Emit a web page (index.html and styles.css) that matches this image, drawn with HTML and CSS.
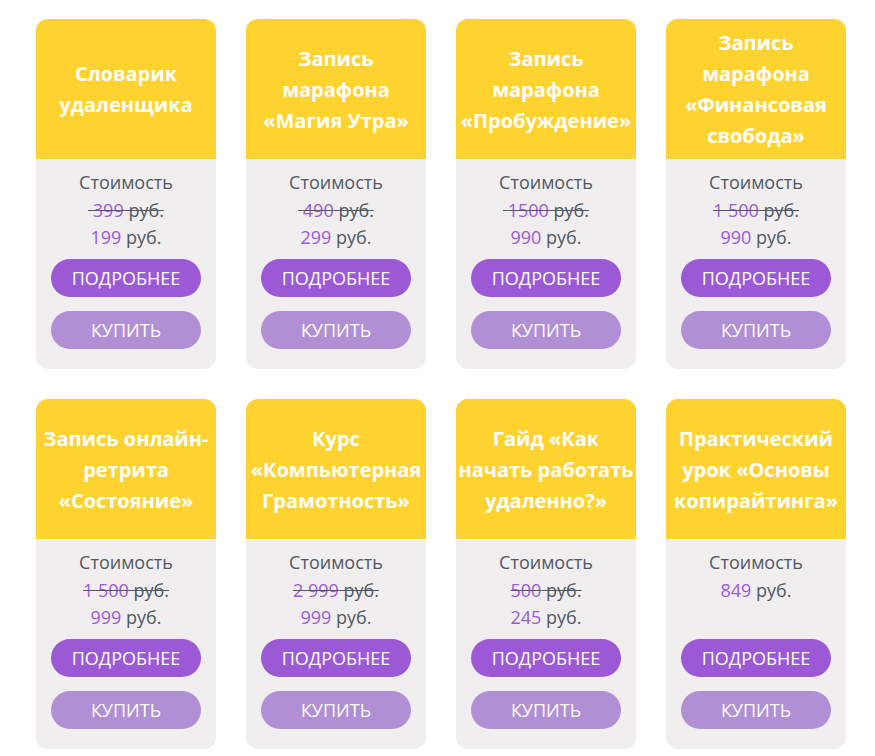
FILE: index.html
```html
<!DOCTYPE html>
<html lang="ru">
<head>
<meta charset="utf-8">
<link rel="stylesheet" href="styles.css">
</head>
<body>
<div class="grid">
  <div class="card">
    <div class="head">Словарик удаленщика</div>
    <div class="body">
      <div class="label">Стоимость</div>
      <div class="old"><s>&nbsp;<span class="num">399</span> руб.</s></div>
      <div class="new"><span class="num">199</span> руб.</div>
      <a class="btn more">ПОДРОБНЕЕ</a>
      <a class="btn buy">КУПИТЬ</a>
    </div>
  </div>
  <div class="card">
    <div class="head">Запись марафона «Магия Утра»</div>
    <div class="body">
      <div class="label">Стоимость</div>
      <div class="old"><s>&nbsp;<span class="num">490</span> руб.</s></div>
      <div class="new"><span class="num">299</span> руб.</div>
      <a class="btn more">ПОДРОБНЕЕ</a>
      <a class="btn buy">КУПИТЬ</a>
    </div>
  </div>
  <div class="card">
    <div class="head">Запись марафона «Пробуждение»</div>
    <div class="body">
      <div class="label">Стоимость</div>
      <div class="old"><s>&nbsp;<span class="num">1500</span> руб.</s></div>
      <div class="new"><span class="num">990</span> руб.</div>
      <a class="btn more">ПОДРОБНЕЕ</a>
      <a class="btn buy">КУПИТЬ</a>
    </div>
  </div>
  <div class="card">
    <div class="head">Запись марафона «Финансовая свобода»</div>
    <div class="body">
      <div class="label">Стоимость</div>
      <div class="old"><s><span class="num">1 500</span> руб.</s></div>
      <div class="new"><span class="num">990</span> руб.</div>
      <a class="btn more">ПОДРОБНЕЕ</a>
      <a class="btn buy">КУПИТЬ</a>
    </div>
  </div>
  <div class="card">
    <div class="head">Запись онлайн-ретрита «Состояние»</div>
    <div class="body">
      <div class="label">Стоимость</div>
      <div class="old"><s><span class="num">1 500</span> руб.</s></div>
      <div class="new"><span class="num">999</span> руб.</div>
      <a class="btn more">ПОДРОБНЕЕ</a>
      <a class="btn buy">КУПИТЬ</a>
    </div>
  </div>
  <div class="card">
    <div class="head">Курс «Компьютерная Грамотность»</div>
    <div class="body">
      <div class="label">Стоимость</div>
      <div class="old"><s><span class="num">2 999</span> руб.</s></div>
      <div class="new"><span class="num">999</span> руб.</div>
      <a class="btn more">ПОДРОБНЕЕ</a>
      <a class="btn buy">КУПИТЬ</a>
    </div>
  </div>
  <div class="card">
    <div class="head">Гайд «Как начать работать удаленно?»</div>
    <div class="body">
      <div class="label">Стоимость</div>
      <div class="old"><s><span class="num">500</span> руб.</s></div>
      <div class="new"><span class="num">245</span> руб.</div>
      <a class="btn more">ПОДРОБНЕЕ</a>
      <a class="btn buy">КУПИТЬ</a>
    </div>
  </div>
  <div class="card">
    <div class="head">Практический урок «Основы копирайтинга»</div>
    <div class="body">
      <div class="label">Стоимость</div>
      <div class="new"><span class="num">849</span> руб.</div>
      <a class="btn more">ПОДРОБНЕЕ</a>
      <a class="btn buy">КУПИТЬ</a>
    </div>
  </div>
</div>
</body>
</html>
```
FILE: styles.css
```css
* { box-sizing: border-box; }
html, body { margin: 0; padding: 0; background: #fff; }
body { font-family: "Open Sans", "Noto Sans", sans-serif; }
.grid {
  display: grid;
  grid-template-columns: repeat(4, 180px);
  column-gap: 30px;
  row-gap: 30px;
  padding: 19px 0 0 36px;
}
.card {
  width: 180px;
  border-radius: 12px;
  overflow: hidden;
  background: #f1eef0;
  display: flex;
  flex-direction: column;
}
.head {
  height: 140px;
  background: #fed330;
  color: #fff;
  font-weight: 700;
  font-size: 20px;
  line-height: 31px;
  text-align: center;
  display: flex;
  align-items: center;
  justify-content: center;
  padding: 0 1px;
}
.body {
  height: 210px;
  display: flex;
  flex-direction: column;
  align-items: center;
  padding: 10px 15px 20px;
  font-size: 18px;
  line-height: 27.5px;
  color: #4f5862;
  text-align: center;
}
.old s { text-decoration-color: #4f5862; }
.num { color: #9b59d6; }
.btn {
  display: block;
  width: 150px;
  height: 38px;
  border-radius: 19px;
  color: #fff;
  font-size: 18px;
  line-height: 38px;
  text-align: center;
}
.more { background: #9b59d6; margin-top: auto; }
.buy { background: #b08fd4; margin-top: 14px; }
```
